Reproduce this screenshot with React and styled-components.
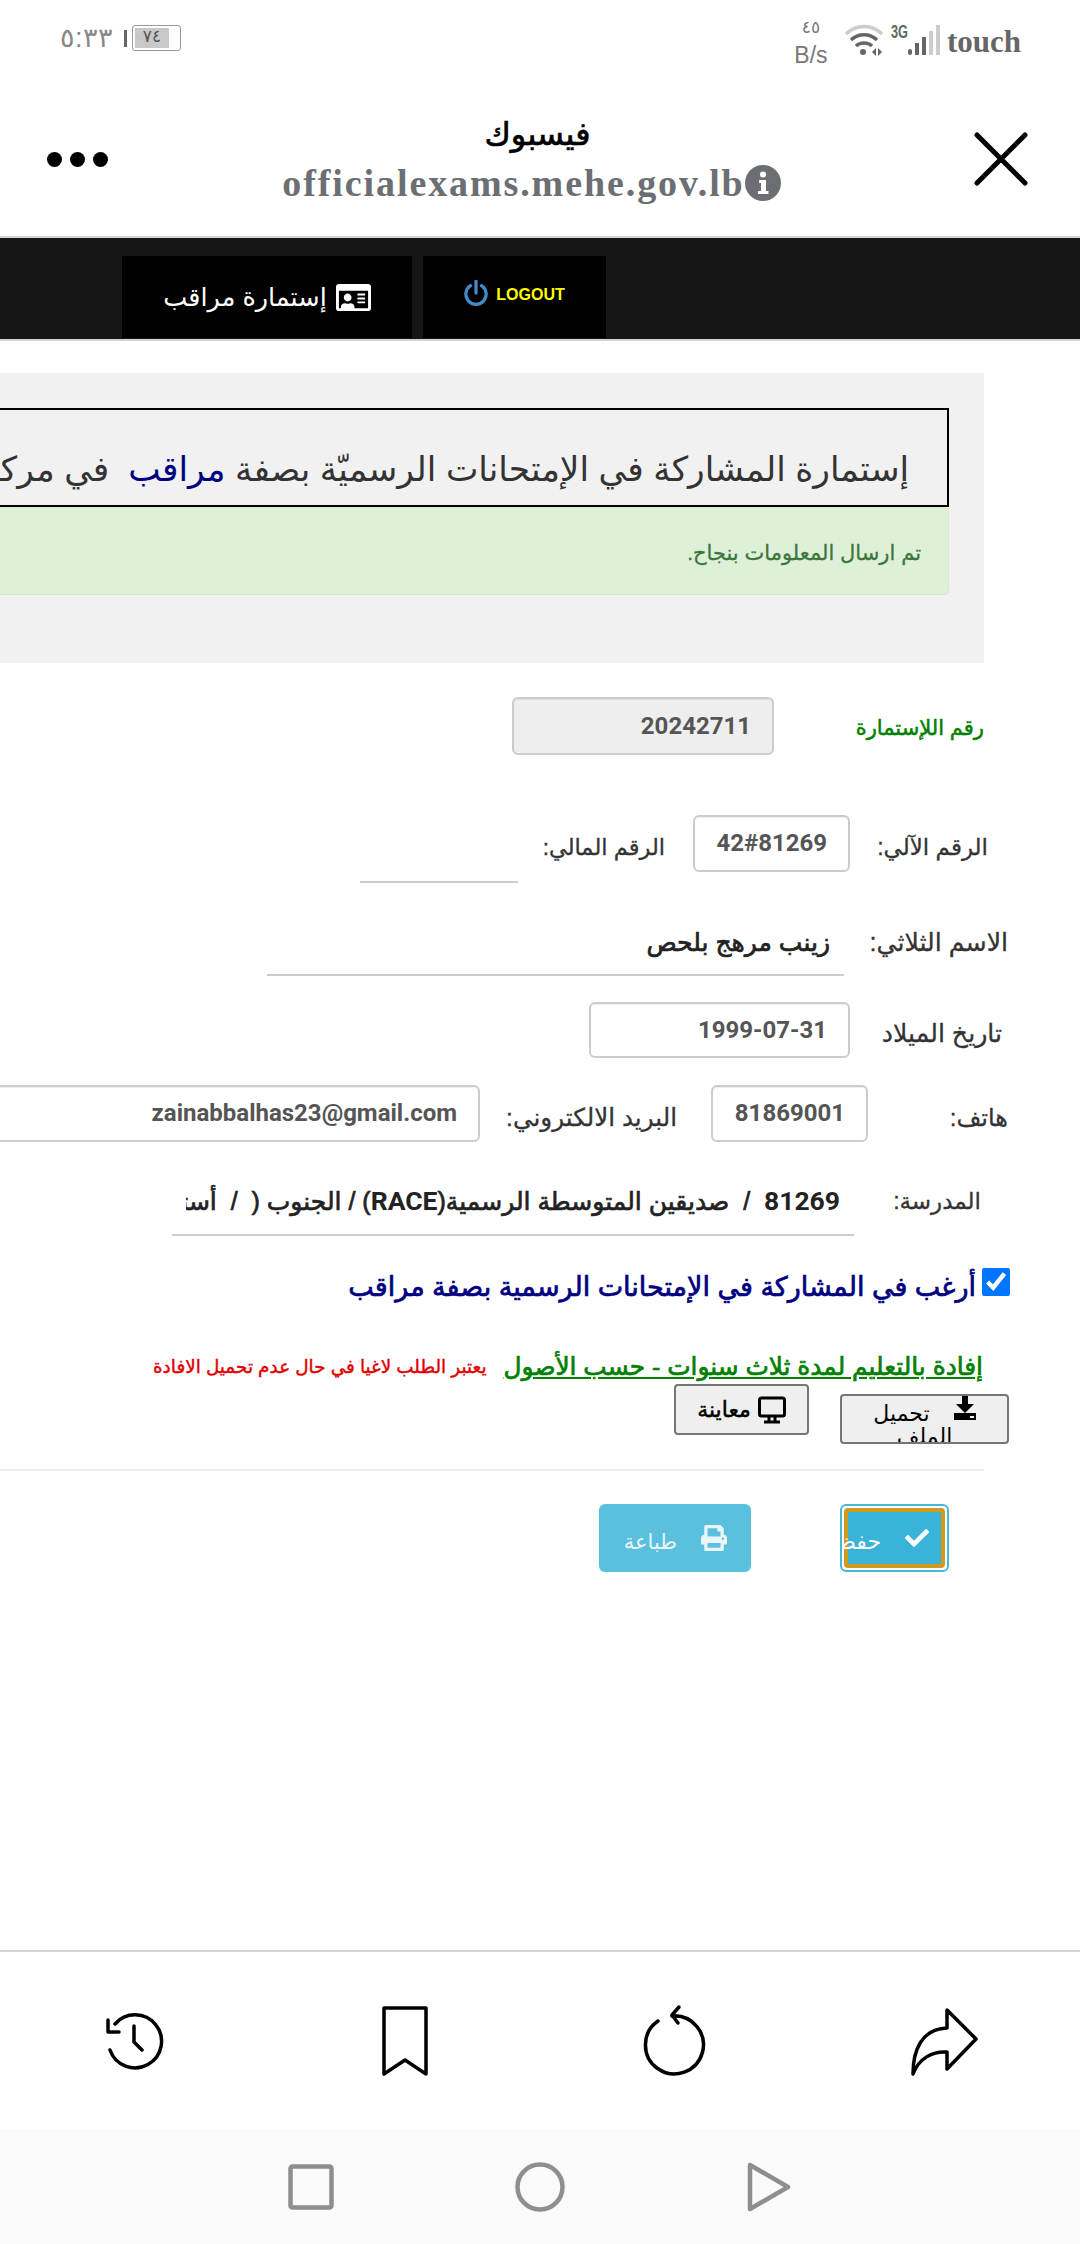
import React from "react";
import styled, { createGlobalStyle, css } from "styled-components";
import { FaCheck, FaPrint, FaRegIdCard } from "react-icons/fa";

const GlobalStyle = createGlobalStyle`
  html, body {
    margin: 0;
    padding: 0;
    background: #fff;
  }
  body {
    font-family: "Liberation Sans", "Noto Sans", "DejaVu Sans", sans-serif;
  }
`;

// the bold arabic face is far wider than the one in the screenshot
const heavy = css`
  font-weight: 400;
  -webkit-text-stroke: 0.7px currentColor;
`;

const Page = styled.div`
  width: 1080px;
  height: 2244px;
  overflow: hidden;
  position: relative;
  display: flex;
  flex-direction: column;
`;

const StatusBar = styled.div`
  height: 70px;
  display: flex;
  justify-content: space-between;
  padding: 0 60px;
  color: #777;
`;

const StatusLeft = styled.div`
  display: flex;
  align-items: center;
  gap: 5px;
  height: 76px;
`;

const Time = styled.span`
  font-size: 27px;
  font-weight: 300;
  width: 60px;
  color: #888;
`;

const BatterySep = styled.span`
  width: 3px;
  height: 17px;
  background: #666;
  margin-left: -1px;
`;

const Battery = styled.div`
  width: 49px;
  height: 26px;
  border: 1.5px solid #999;
  border-radius: 3px;
  padding: 2px;
  box-sizing: border-box;
  display: flex;
`;

const BatteryFill = styled.div`
  width: 34px;
  background: #c8c8c8;
  font-size: 17px;
  line-height: 18px;
  text-align: center;
  color: #555;
`;

const StatusRight = styled.div`
  display: flex;
  align-items: flex-start;
  position: relative;
  left: 1px;
`;

const Speed = styled.div`
  width: 40px;
  margin-right: 14px;
  margin-top: 16px;
  text-align: center;
  color: #777;
  font-size: 23px;
  line-height: 30px;
  display: flex;
  flex-direction: column;
`;

const SpeedValue = styled.span`
  font-size: 17px;
  line-height: 24px;
`;

const NetIcons = styled.div`
  display: flex;
  align-items: flex-start;
  margin-top: 23px;
`;

const Touch = styled.span`
  font-family: "Liberation Serif", serif;
  font-weight: 700;
  font-size: 31px;
  color: #666;
  line-height: 40px;
  margin-top: 22px;
  margin-left: 4px;
`;

const TitleBar = styled.div`
  height: 166px;
  box-sizing: border-box;
  display: grid;
  grid-template-columns: 1fr auto 1fr;
  align-items: center;
  padding: 0 52px 0 47px;
`;

const Dots = styled.div`
  display: flex;
  gap: 8px;
  margin-top: 12px;
`;

const Dot = styled.span`
  width: 15px;
  height: 15px;
  border-radius: 50%;
  background: #000;
`;

const TitleBlock = styled.div`
  display: flex;
  flex-direction: column;
  align-items: center;
  padding-top: 12px;
`;

const SiteName = styled.div`
  font-size: 32px;
  ${heavy}
  line-height: 48px;
  color: #000;
`;

const UrlLine = styled.div`
  display: flex;
  align-items: center;
  margin-left: -12px;
  color: #6b6e72;
`;

const Url = styled.span`
  font-family: "Liberation Serif", serif;
  font-weight: 700;
  font-size: 38px;
  letter-spacing: 1.9px;
  line-height: 50px;
`;

const CloseWrap = styled.div`
  justify-self: end;
  display: flex;
  margin-top: 12px;
`;

const TopNav = styled.div`
  height: 103px;
  box-sizing: border-box;
  background: #161616;
  border-top: 2px solid #d5d5d5;
  display: flex;
  gap: 11px;
  padding: 18px 0 0 122px;
`;

const NavItem = styled.div`
  width: ${(p) => p.$w}px;
  height: 82px;
  background: #000;
  display: flex;
  align-items: center;
  justify-content: center;
  gap: ${(p) => p.$gap}px;
`;

const NavLabel = styled.span`
  color: #fff;
  font-size: 25.5px;
  direction: rtl;
`;

const Logout = styled.span`
  color: #ffff00;
  font-size: 16px;
  font-weight: 700;
  margin-top: -4px;
`;

const Divider = styled.div`
  height: 2px;
  background: #d5d5d5;
`;

const Panel = styled.div`
  direction: rtl;
  margin-top: 32px;
  width: 984px;
  height: 290px;
  padding-top: 35px;
  box-sizing: border-box;
  background: #f1f1f1;
  overflow: hidden;
`;

const HeadingBox = styled.div`
  margin-right: 35px;
  height: 99px;
  width: 1100px;
  box-sizing: border-box;
  border: 2px solid #000;
  display: flex;
  align-items: center;
  padding-right: 38px;
  padding-top: 22px;
  white-space: pre;
  font-size: 34.4px;
  color: #333;
`;

const Navy = styled.span`
  color: #000080;
`;

const Alert = styled.div`
  margin-right: 35px;
  height: 88px;
  width: 1100px;
  box-sizing: border-box;
  background: #dff0d8;
  border: 1px solid #d6e9c6;
  border-radius: 4px;
  display: flex;
  align-items: center;
  padding: 4px 27px 0 0;
  color: #3c763d;
  font-size: 21px;
  -webkit-text-stroke: 0.3px currentColor;
`;

const Form = styled.div`
  direction: rtl;
  display: flex;
  flex-direction: column;
`;

const Row = styled.div`
  display: flex;
  align-items: center;
  height: ${(p) => p.$h}px;
  margin-top: ${(p) => p.$mt}px;
  padding-right: ${(p) => p.$pr}px;
  white-space: nowrap;
`;

const Label = styled.div`
  flex: none;
  width: ${(p) => p.$w}px;
  margin-left: ${(p) => p.$ml}px;
  font-size: ${(p) => p.$fs || 24}px;
  color: #333;
  -webkit-text-stroke: 0.3px currentColor;
  position: relative;
  top: ${(p) => p.$top || 0}px;
`;

const FormNumberLabel = styled(Label)`
  color: #008000;
  font-size: 21px;
  -webkit-text-stroke: 0.5px currentColor;
`;

const Input = styled.div`
  flex: none;
  box-sizing: border-box;
  width: ${(p) => p.$w}px;
  height: ${(p) => p.$h || 57}px;
  margin-left: ${(p) => p.$ml || 0}px;
  align-self: flex-start;
  border: 2px solid #ccc;
  border-radius: 6px;
  background: ${(p) => (p.$disabled ? "#eee" : "#fff")};
  box-shadow: inset 0 1px 1px rgba(0, 0, 0, 0.075);
  color: #555;
  font-family: "Roboto", "Liberation Sans", sans-serif;
  font-weight: 700;
  font-size: 24px;
  line-height: ${(p) => (p.$h || 57) - 4}px;
  padding: 0 21px;
  text-align: right;
`;

const LineField = styled.div`
  flex: none;
  box-sizing: border-box;
  width: ${(p) => p.$w}px;
  height: ${(p) => p.$h}px;
  align-self: flex-start;
  border-bottom: 2px solid #ccc;
  padding: 0 14px;
  color: #222;
  font-size: 25px;
  ${heavy}
  line-height: 34px;
`;

const Clip = styled.div`
  overflow: hidden;
  white-space: pre;
`;

const Latin = styled.span`
  font-family: "Roboto", "Liberation Sans", sans-serif;
  font-weight: 700;
  font-size: 1.06em;
  -webkit-text-stroke: 0;
`;

const CheckRow = styled.div`
  display: flex;
  align-items: flex-start;
  gap: 6px;
  margin-top: 32px;
  padding-right: 70px;
  height: 38px;
`;

const Check = styled.input`
  width: 28px;
  height: 28px;
  margin: 0;
  accent-color: #0075ff;
  flex: none;
`;

const CheckText = styled.span`
  color: #000080;
  font-size: 27px;
  ${heavy}
  line-height: 38px;
`;

const LinkRow = styled.div`
  display: flex;
  align-items: center;
  gap: 17px;
  height: 35px;
  margin-top: 43px;
  padding-right: 97px;
  white-space: nowrap;
`;

const FileLink = styled.a`
  color: #008000;
  font-size: 24.8px;
  ${heavy}
  text-decoration: underline;
`;

const Note = styled.span`
  color: #e00000;
  font-size: 18.4px;
  -webkit-text-stroke: 0.4px currentColor;
`;

const ButtonsRow = styled.div`
  display: flex;
  align-items: flex-start;
  gap: 31px;
  height: 60px;
  padding-right: 71px;
`;

const FileButton = styled.div`
  box-sizing: border-box;
  background: #efefef;
  border: 2px solid #767676;
  border-radius: 4px;
  color: #000;
  font-size: 22px;
  overflow: hidden;
`;

const DownloadButton = styled(FileButton)`
  width: 169px;
  height: 50px;
  margin-top: 10px;
  padding: 6px 18px 0;
  text-align: center;
  line-height: 23px;
`;

const DownloadIcon = styled.svg`
  vertical-align: top;
  margin: -6px 0 0 24px;
`;

const PreviewButton = styled(FileButton)`
  width: 135px;
  height: 51px;
  display: flex;
  align-items: center;
  justify-content: center;
  gap: 7px;
  -webkit-text-stroke: 0.5px currentColor;
`;

const Rule = styled.div`
  height: 2px;
  margin: 25px 96px 0 0;
  background: #eee;
`;

const ActionsRow = styled.div`
  display: flex;
  gap: 89px;
  height: 68px;
  margin-top: 33px;
  padding-right: 131px;
`;

const SaveButton = styled.div`
  width: 109px;
  box-sizing: border-box;
  border: 2px solid #46b8da;
  border-radius: 6px;
  background: #fff;
  padding: 2px;
  display: flex;
  overflow: hidden;
`;

const SaveInner = styled.div`
  flex: 1;
  min-width: 0;
  box-sizing: border-box;
  border: 4px solid #d09a1f;
  border-radius: 4px;
  background: #39b3d7;
  color: #fff;
  font-size: 22px;
  display: flex;
  align-items: center;
  padding-right: 12px;
  gap: 24px;
  white-space: nowrap;

  svg {
    flex: none;
  }
`;

const ButtonText = styled.span`
  margin-top: 8px;
`;

const PrintButton = styled.div`
  width: 152px;
  box-sizing: border-box;
  border-radius: 6px;
  background: #5bc0de;
  color: #e8f6fa;
  font-size: 21px;
  display: flex;
  align-items: center;
  padding-right: 24px;
  gap: 24px;
`;

const Spacer = styled.div`
  flex: 1;
`;

const Toolbar = styled.div`
  height: 180px;
  border-top: 2px solid #d2d2d2;
  box-sizing: border-box;
  display: grid;
  grid-template-columns: repeat(4, 270px);
  align-items: center;
  justify-items: center;
`;

const SystemNav = styled.div`
  height: 114px;
  background: #fafafa;
  display: flex;
  justify-content: center;
  align-items: center;
`;

const SystemSlot = styled.div`
  width: 229px;
  display: flex;
  justify-content: center;
`;

const BlackStroke = { fill: "none", stroke: "#000", strokeWidth: 3.5, strokeLinecap: "round", strokeLinejoin: "round" };
const GrayStroke = { fill: "none", stroke: "#8e8e8e", strokeWidth: 4.5, strokeLinejoin: "round" };

const App = () => (
  <Page>
    <GlobalStyle />
    <StatusBar>
      <StatusLeft>
        <Time>٥:٣٣</Time>
        <BatterySep />
        <Battery>
          <BatteryFill>٧٤</BatteryFill>
        </Battery>
      </StatusLeft>
      <StatusRight>
        <Speed>
          <SpeedValue>٤٥</SpeedValue>
          <span>B/s</span>
        </Speed>
        <NetIcons>
          <svg width="38" height="34" viewBox="0 0 38 34">
            <path d="M1 11 C11 1 27 1 37 11" fill="none" stroke="#ccc" strokeWidth="3.5" />
            <path d="M6 17 C13 10 25 10 32 17" fill="none" stroke="#666" strokeWidth="3.5" />
            <path d="M11 23 C15 19 23 19 27 23" fill="none" stroke="#666" strokeWidth="3.5" />
            <circle cx="18" cy="29" r="3" fill="#666" />
            <path d="M27 29 L31 25 V33 Z M33 25 L37 29 L33 33 Z" fill="#666" />
          </svg>
          <svg width="60" height="34" viewBox="0 0 60 34">
            <text x="8" y="15" fontFamily="Liberation Sans" fontWeight="700" fontSize="18" fill="#666" textLength="17" lengthAdjust="spacingAndGlyphs">3G</text>
            <rect x="25" y="26" width="4" height="6" rx="2" fill="#666" />
            <rect x="32" y="20" width="4" height="12" fill="#666" />
            <rect x="39" y="14" width="4" height="18" fill="#666" />
            <rect x="46" y="8" width="4" height="24" fill="#ccc" />
            <rect x="53" y="2" width="4" height="30" fill="#ccc" />
          </svg>
        </NetIcons>
        <Touch>touch</Touch>
      </StatusRight>
    </StatusBar>

    <TitleBar>
      <Dots>
        <Dot />
        <Dot />
        <Dot />
      </Dots>
      <TitleBlock>
        <SiteName>فيسبوك</SiteName>
        <UrlLine>
          <Url>officialexams.mehe.gov.lb</Url>
          <svg width="36" height="36" viewBox="0 0 36 36">
            <circle cx="18" cy="18" r="18" fill="#6b6e72" />
            <circle cx="18" cy="9.5" r="3" fill="#fff" />
            <path d="M14 15 H21 V26 H23.5 V29 H13 V26 H16 V18 H14 Z" fill="#fff" />
          </svg>
        </UrlLine>
      </TitleBlock>
      <CloseWrap>
        <svg width="54" height="54" viewBox="0 0 54 54">
          <path d="M3 3 L51 51 M51 3 L3 51" fill="none" stroke="#000" strokeWidth="5" strokeLinecap="round" />
        </svg>
      </CloseWrap>
    </TitleBar>

    <TopNav>
      <NavItem $w={290} $gap={9}>
        <NavLabel>إستمارة مراقب</NavLabel>
        <FaRegIdCard size={35} color="#fff" />
      </NavItem>
      <NavItem $w={183} $gap={8}>
        <svg width="24" height="28" viewBox="0 0 26 30" style={{ marginTop: -6 }}>
          <path d="M7 6 A11 11 0 1 0 19 6 M13 1 V14" fill="none" stroke="#428bca" strokeWidth="3.5" strokeLinecap="round" />
        </svg>
        <Logout>LOGOUT</Logout>
      </NavItem>
    </TopNav>
    <Divider />

    <Panel>
      <HeadingBox>
        <span>
          إستمارة المشاركة في الإمتحانات الرسميّة بصفة <Navy>مراقب</Navy>  في مركز الامتحانات
        </span>
      </HeadingBox>
      <Alert>تم ارسال المعلومات بنجاح.</Alert>
    </Panel>

    <Form>
      <Row $h={58} $mt={34} $pr={96}>
        <FormNumberLabel $w={127} $ml={83} $top={2}>رقم اللإستمارة</FormNumberLabel>
        <Input $w={262} $h={58} $disabled>20242711</Input>
      </Row>

      <Row $h={68} $mt={60} $pr={92}>
        <Label $w={110} $ml={28} $top={-2} $fs={23}>الرقم الآلي:</Label>
        <Input $w={157} $ml={28}>
          <bdi>42#81269</bdi>
        </Input>
        <Label $w={121} $ml={26} $top={-2} $fs={22.5}>الرقم المالي:</Label>
        <LineField $w={158} $h={68} />
      </Row>

      <Row $h={51} $mt={42} $pr={72}>
        <Label $w={138} $ml={26} $top={-8} $fs={25.2}>الاسم الثلاثي:</Label>
        <LineField $w={577} $h={51}>زينب مرهج بلحص</LineField>
      </Row>

      <Row $h={56} $mt={26} $pr={78}>
        <Label $w={126} $ml={26} $top={3} $fs={25.2}>تاريخ الميلاد</Label>
        <Input $w={261} $h={56}>
          <bdi>1999-07-31</bdi>
        </Input>
      </Row>

      <Row $h={57} $mt={27} $pr={72}>
        <Label $w={57} $ml={83} $top={4}>هاتف:</Label>
        <Input $w={157} $ml={34}>81869001</Input>
        <Label $w={169} $ml={28} $top={4} $fs={24.6}>البريد الالكتروني:</Label>
        <Input $w={520}>zainabbalhas23@gmail.com</Input>
      </Row>

      <Row $h={52} $mt={42} $pr={99}>
        <Label $w={85} $ml={42} $top={-9} $fs={23}>المدرسة:</Label>
        <LineField $w={682} $h={52}>
          <Clip>
            <Latin>81269</Latin>  /  صديقين المتوسطة الرسمية(<Latin>RACE</Latin>) / الجنوب (  /  أستاذ تعليم ثانوي)
          </Clip>
        </LineField>
      </Row>

      <CheckRow>
        <Check type="checkbox" defaultChecked />
        <CheckText>أرغب في المشاركة في الإمتحانات الرسمية بصفة مراقب</CheckText>
      </CheckRow>

      <LinkRow>
        <FileLink href="#">إفادة بالتعليم لمدة ثلاث سنوات - حسب الأصول</FileLink>
        <Note>يعتبر الطلب لاغيا في حال عدم تحميل الافادة</Note>
      </LinkRow>

      <ButtonsRow>
        <DownloadButton>
          <DownloadIcon width="22" height="24" viewBox="0 0 22 24">
            <path d="M8 0 H14 V8 H20 L11 17 L2 8 H8 Z" fill="#000" />
            <path d="M0 17 H22 V24 H0 Z" fill="#000" />
            <rect x="16" y="20" width="4" height="2" fill="#efefef" />
          </DownloadIcon>
          تحميل الملف
        </DownloadButton>
        <PreviewButton>
          <svg width="28" height="28" viewBox="0 0 28 28">
            <rect x="1.5" y="2" width="25" height="18" rx="2" fill="none" stroke="#000" strokeWidth="3" />
            <path d="M11 21 V25 M6 26 H22 M17 21 V25" fill="none" stroke="#000" strokeWidth="3" />
          </svg>
          معاينة
        </PreviewButton>
      </ButtonsRow>

      <Rule />

      <ActionsRow>
        <SaveButton>
          <SaveInner>
            <FaCheck size={24} />
            <ButtonText>حفظ</ButtonText>
          </SaveInner>
        </SaveButton>
        <PrintButton>
          <FaPrint size={26} />
          <ButtonText>طباعة</ButtonText>
        </PrintButton>
      </ActionsRow>
    </Form>

    <Spacer />

    <Toolbar>
      <svg width="60" height="60" viewBox="0 0 60 60" style={BlackStroke}>
        <path d="M5 39 A26.5 26.5 0 1 0 10 13" />
        <path d="M3 9 V21 H14" />
        <path d="M29 15 V31 L37 39" />
      </svg>
      <svg width="48" height="72" viewBox="0 0 48 72" style={BlackStroke}>
        <path d="M3 3 H45 V69 L24 55 L3 69 Z" />
      </svg>
      <svg width="70" height="74" viewBox="0 0 70 74" style={BlackStroke}>
        <path d="M32 12 A29 29 0 1 1 18 17" />
        <path d="M39 3 L32 11 L38 19" />
      </svg>
      <svg width="72" height="70" viewBox="0 0 72 70" style={BlackStroke}>
        <path d="M38 4 L67 33 L38 63 V46 C24 45 10 52 4 68 C4 45 12 23 38 22 Z" />
      </svg>
    </Toolbar>

    <SystemNav>
      <SystemSlot>
        <svg width="46" height="46" viewBox="0 0 46 46" style={GrayStroke}>
          <rect x="2.5" y="2.5" width="41" height="41" rx="2" />
        </svg>
      </SystemSlot>
      <SystemSlot>
        <svg width="50" height="50" viewBox="0 0 50 50" style={GrayStroke}>
          <circle cx="25" cy="25" r="22.5" />
        </svg>
      </SystemSlot>
      <SystemSlot>
        <svg width="44" height="50" viewBox="0 0 44 50" style={GrayStroke}>
          <path d="M3 3 L41 25 L3 47 Z" />
        </svg>
      </SystemSlot>
    </SystemNav>
  </Page>
);

export default App;
